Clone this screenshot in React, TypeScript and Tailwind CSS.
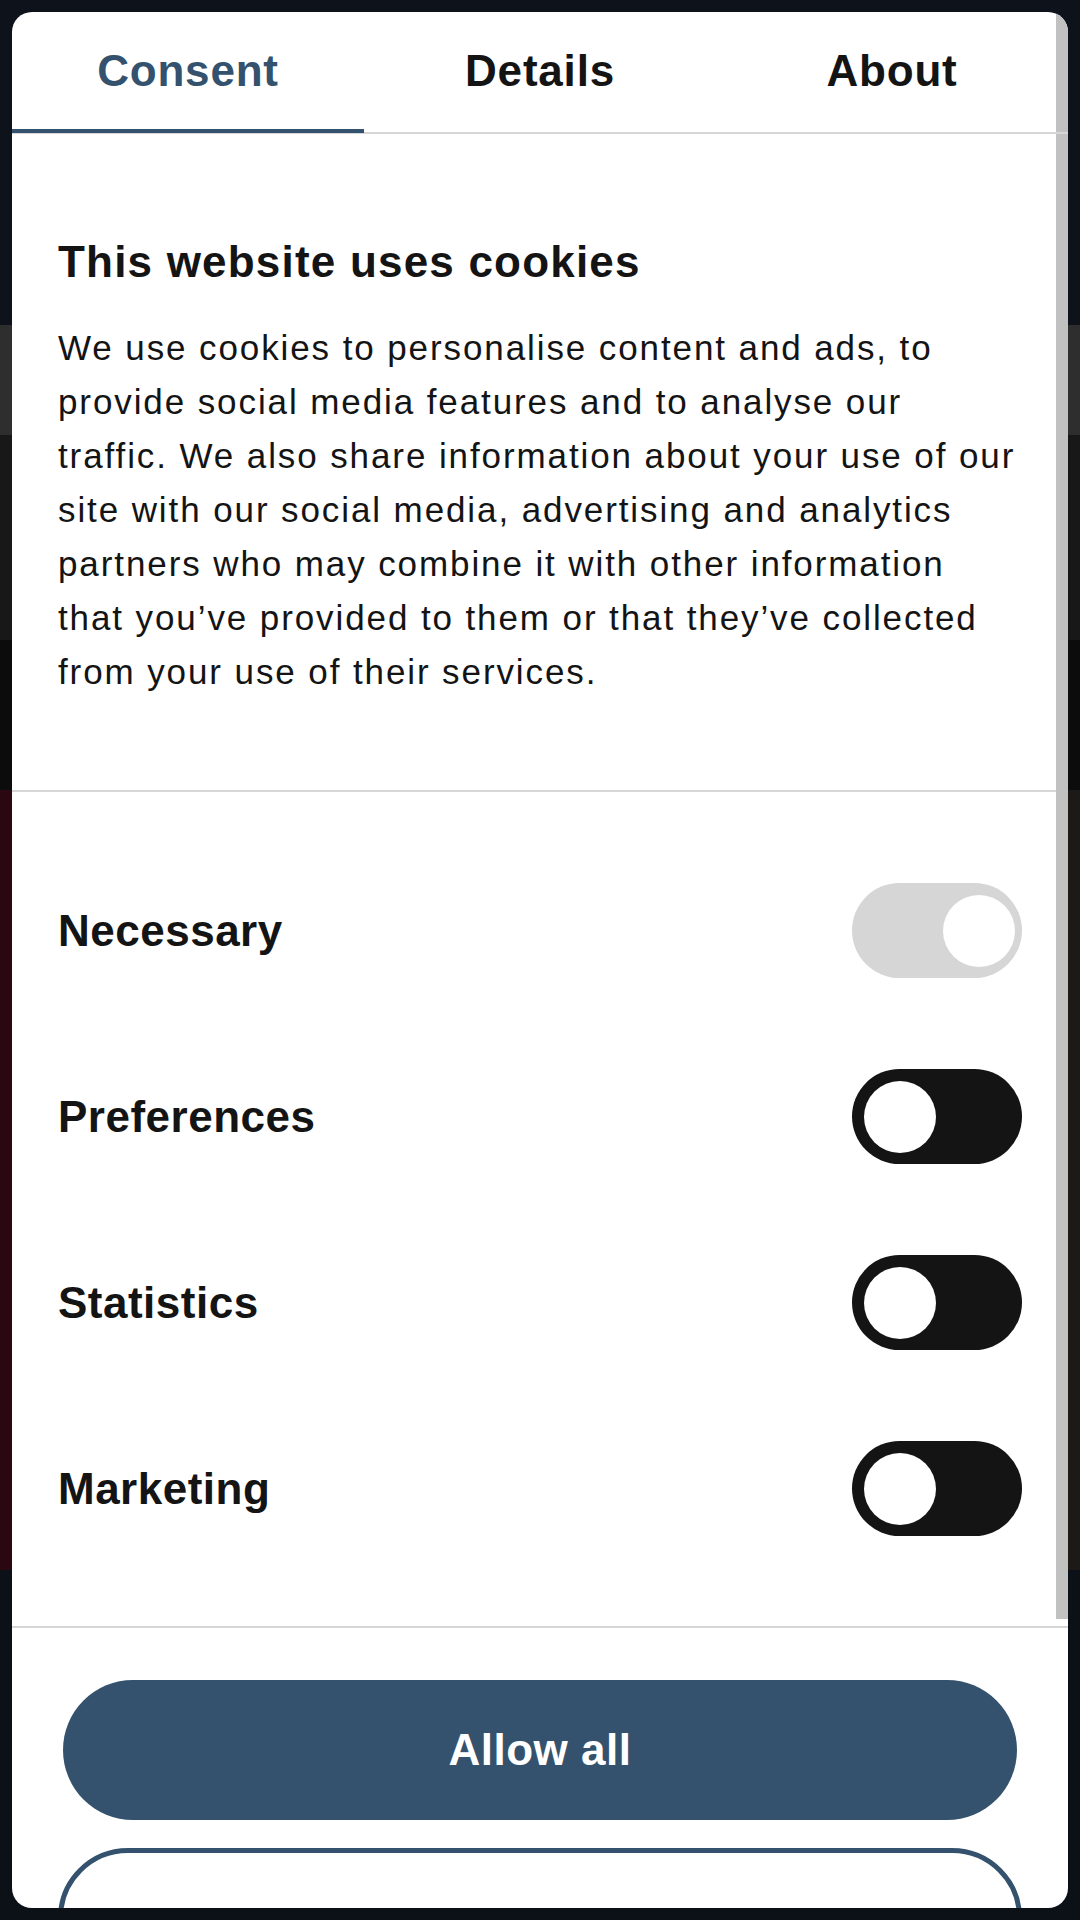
import React from 'react';

const categories: { label: string; locked?: boolean }[] = [
  { label: 'Necessary', locked: true },
  { label: 'Preferences' },
  { label: 'Statistics' },
  { label: 'Marketing' },
];

function Toggle({ locked }: { locked?: boolean }) {
  return (
    <div
      className={`w-[170px] h-[95px] rounded-full flex items-center shrink-0 ${
        locked ? 'bg-[#d6d6d6] justify-end pr-[7px]' : 'bg-[#141414] justify-start pl-[12px]'
      }`}
    >
      <div className="w-[72px] h-[72px] rounded-full bg-white" />
    </div>
  );
}

export default function App() {
  const tabs = ['Consent', 'Details', 'About'];

  return (
    <div className="relative w-[1080px] h-[1920px] overflow-hidden bg-[#0d1118]">
      {/* page behind the overlay */}
      <div className="flex flex-col h-full">
        <div className="h-[325px] bg-[#0e121a]" />
        <div className="h-[110px] bg-[#2e2e2e]" />
        <div className="h-[205px] bg-[#181818]" />
        <div className="h-[150px] bg-[#0c0c0c]" />
        <div className="h-[780px] flex">
          <div className="w-1/2 bg-[#2a0711]" />
          <div className="w-1/2 bg-[#1d1917]" />
        </div>
        <div className="flex-1 bg-[#0c1017]" />
      </div>

      {/* consent dialog */}
      <div className="absolute left-[12px] top-[12px] w-[1056px] h-[1896px] bg-white rounded-[20px] overflow-hidden flex flex-col font-['Liberation_Sans',Arial,sans-serif] text-[#141414]">
        <div className="relative shrink-0">
          <div className="absolute right-0 top-0 w-[12px] h-[1607px] bg-[#c1c1c1]" />

          {/* tabs */}
          <div className="relative flex border-b-2 border-[#d6d6d6]">
            {tabs.map((t, i) => (
              <div
                key={t}
                className={`flex-1 h-[121px] -mb-px flex items-center justify-center border-b-4 text-[44px] font-bold tracking-[0.8px] ${
                  i === 0 ? 'border-[#34526e] text-[#34526e]' : 'border-transparent text-[#141414]'
                }`}
              >
                {t}
              </div>
            ))}
          </div>

          {/* intro */}
          <div className="px-[46px] pt-[102px] pb-[91px]">
            <h2 className="text-[44px] leading-[52px] font-bold tracking-[1.2px]">This website uses cookies</h2>
            <p className="mt-[33px] text-[35px] leading-[54px] tracking-[1.9px]">
              We use cookies to personalise content and ads, to provide social media features and to analyse our
              traffic. We also share information about your use of our site with our social media, advertising and
              analytics partners who may combine it with other information that you’ve provided to them or that
              they’ve collected from your use of their services.
            </p>
          </div>

          {/* categories */}
          <div className="border-t-2 border-[#d6d6d6] px-[46px] pt-[91px] pb-[90px] flex flex-col gap-[91px]">
            {categories.map(c => (
              <div key={c.label} className="flex items-center justify-between h-[95px]">
                <span className="text-[44px] font-bold tracking-[0.5px]">{c.label}</span>
                <Toggle locked={c.locked} />
              </div>
            ))}
          </div>
        </div>

        {/* footer buttons */}
        <div className="shrink-0 border-t-2 border-[#d6d6d6] px-[46px] pt-[52px] flex flex-col gap-[28px]">
          <button className="mx-[5px] h-[140px] rounded-full bg-[#34526e] text-white text-[44px] font-bold tracking-[0.5px]">
            Allow all
          </button>
          <button
            aria-label="Customise"
            className="h-[140px] rounded-full border-[5px] border-[#34526e] bg-white"
          />
        </div>
      </div>
    </div>
  );
}
